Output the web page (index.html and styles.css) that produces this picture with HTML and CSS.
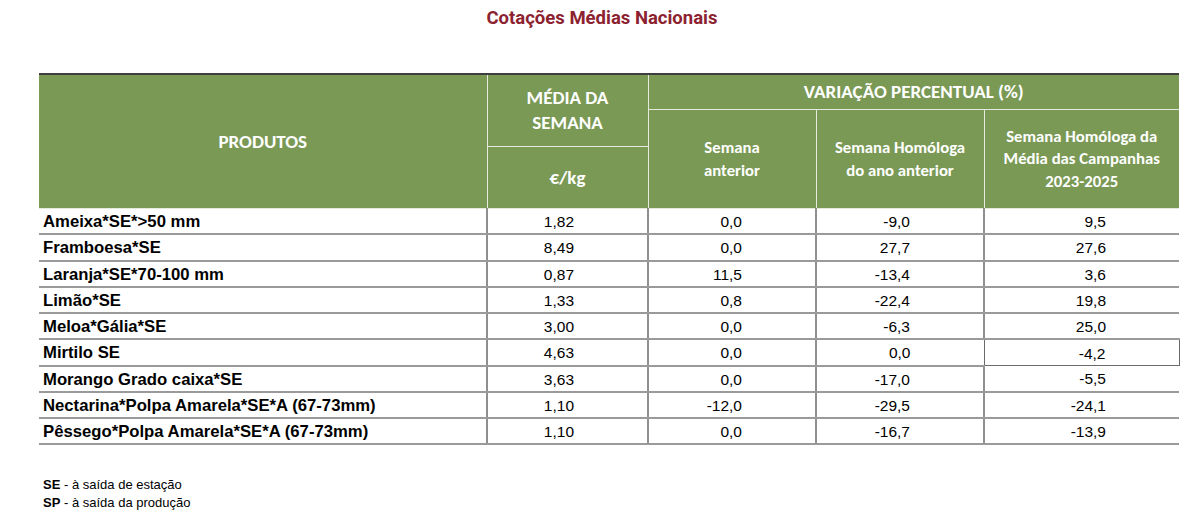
FILE: index.html
```html
<!DOCTYPE html>
<html lang="pt">
<head>
<meta charset="utf-8">
<title>Cotações Médias Nacionais</title>
<link rel="stylesheet" href="styles.css">
</head>
<body>
<h1 class="title">Cotações Médias Nacionais</h1>
<table class="quotes">
  <colgroup>
    <col class="c-prod">
    <col class="c-avg">
    <col class="c-var">
    <col class="c-var">
    <col class="c-last">
  </colgroup>
  <thead>
    <tr class="h-a">
      <th rowspan="3" class="h-prod">PRODUTOS</th>
      <th rowspan="2" class="h-big">MÉDIA DA<br>SEMANA</th>
      <th colspan="3" class="h-big">VARIAÇÃO PERCENTUAL (%)</th>
    </tr>
    <tr class="h-b">
      <th rowspan="2" class="h-sub">Semana<br>anterior</th>
      <th rowspan="2" class="h-sub">Semana Homóloga<br>do ano anterior</th>
      <th rowspan="2" class="h-sub">Semana Homóloga da<br>Média das Campanhas<br>2023-2025</th>
    </tr>
    <tr class="h-c">
      <th class="h-big">€/kg</th>
    </tr>
  </thead>
  <tbody>
    <tr><td class="name">Ameixa*SE*&gt;50 mm</td><td>1,82</td><td>0,0</td><td>-9,0</td><td>9,5</td></tr>
    <tr><td class="name">Framboesa*SE</td><td>8,49</td><td>0,0</td><td>27,7</td><td>27,6</td></tr>
    <tr><td class="name">Laranja*SE*70-100 mm</td><td>0,87</td><td>11,5</td><td>-13,4</td><td>3,6</td></tr>
    <tr><td class="name">Limão*SE</td><td>1,33</td><td>0,8</td><td>-22,4</td><td>19,8</td></tr>
    <tr><td class="name">Meloa*Gália*SE</td><td>3,00</td><td>0,0</td><td>-6,3</td><td>25,0</td></tr>
    <tr><td class="name">Mirtilo SE</td><td>4,63</td><td>0,0</td><td>0,0</td><td class="selected">-4,2</td></tr>
    <tr><td class="name">Morango Grado caixa*SE</td><td>3,63</td><td>0,0</td><td>-17,0</td><td>-5,5</td></tr>
    <tr><td class="name">Nectarina*Polpa Amarela*SE*A (67-73mm)</td><td>1,10</td><td>-12,0</td><td>-29,5</td><td>-24,1</td></tr>
    <tr><td class="name">Pêssego*Polpa Amarela*SE*A (67-73mm)</td><td>1,10</td><td>0,0</td><td>-16,7</td><td>-13,9</td></tr>
  </tbody>
</table>
<div class="notes">
  <p><b>SE</b> - à saída de estação</p>
  <p><b>SP</b> - à saída da produção</p>
</div>
</body>
</html>
```

FILE: styles.css
```css
html, body {
  margin: 0;
  padding: 0;
  background: #ffffff;
}

body {
  width: 1204px;
  font-family: "Liberation Sans", Arial, sans-serif;
  color: #000;
}

.title {
  margin: 0;
  padding-top: 8px;
  height: 22px;
  text-align: center;
  font-family: Roboto, "Liberation Sans", sans-serif;
  font-weight: 700;
  font-size: 18.5px;
  line-height: 20px;
  color: #8c2230;
}

.quotes {
  margin: 43px 0 0 39px;
  width: 1140px;
  border-collapse: collapse;
  table-layout: fixed;
  border-top: 2px solid #3f3f3f;
}

.c-prod { width: 448px; }
.c-avg { width: 161px; }
.c-var { width: 168px; }
.c-last { width: 195px; }

.quotes th {
  background: #7a9955;
  color: #ffffff;
  font-family: Carlito, Lato, "Liberation Sans", sans-serif;
  font-weight: 700;
  text-align: center;
  vertical-align: middle;
  padding: 0;
  border: 1px solid #e4ebdc;
}

.quotes thead tr:first-child th {
  border-top: none;
}

.quotes th.h-prod {
  border-left: none;
  font-size: 19px;
}

.quotes thead tr th:last-child {
  border-right: none;
}

.h-a { height: 35px; }
.h-b { height: 37px; }
.h-c { height: 62px; }

.h-big {
  font-size: 19px;
  line-height: 25px;
}

.h-sub {
  font-size: 16.7px;
  line-height: 22.5px;
}

.quotes tbody tr {
  height: 26.25px;
}

.quotes td {
  padding: 2px 73px 0 0;
  border-bottom: 2px solid #9a9a9a;
  border-left: 2px solid #8f8f8f;
  font-size: 15.5px;
  line-height: 18px;
  text-align: right;
  vertical-align: middle;
  white-space: nowrap;
}

.quotes td.name {
  border-left: none;
  padding: 2px 0 0 4px;
  text-align: left;
  font-weight: 700;
  font-size: 16.7px;
}

.quotes td.selected {
  border: 1px solid #6a6a6a;
}

.notes {
  margin: 31px 0 0 43px;
  font-family: "Liberation Sans", sans-serif;
  font-size: 13px;
  line-height: 18px;
  color: #000;
}

.notes p {
  margin: 0;
}
```
